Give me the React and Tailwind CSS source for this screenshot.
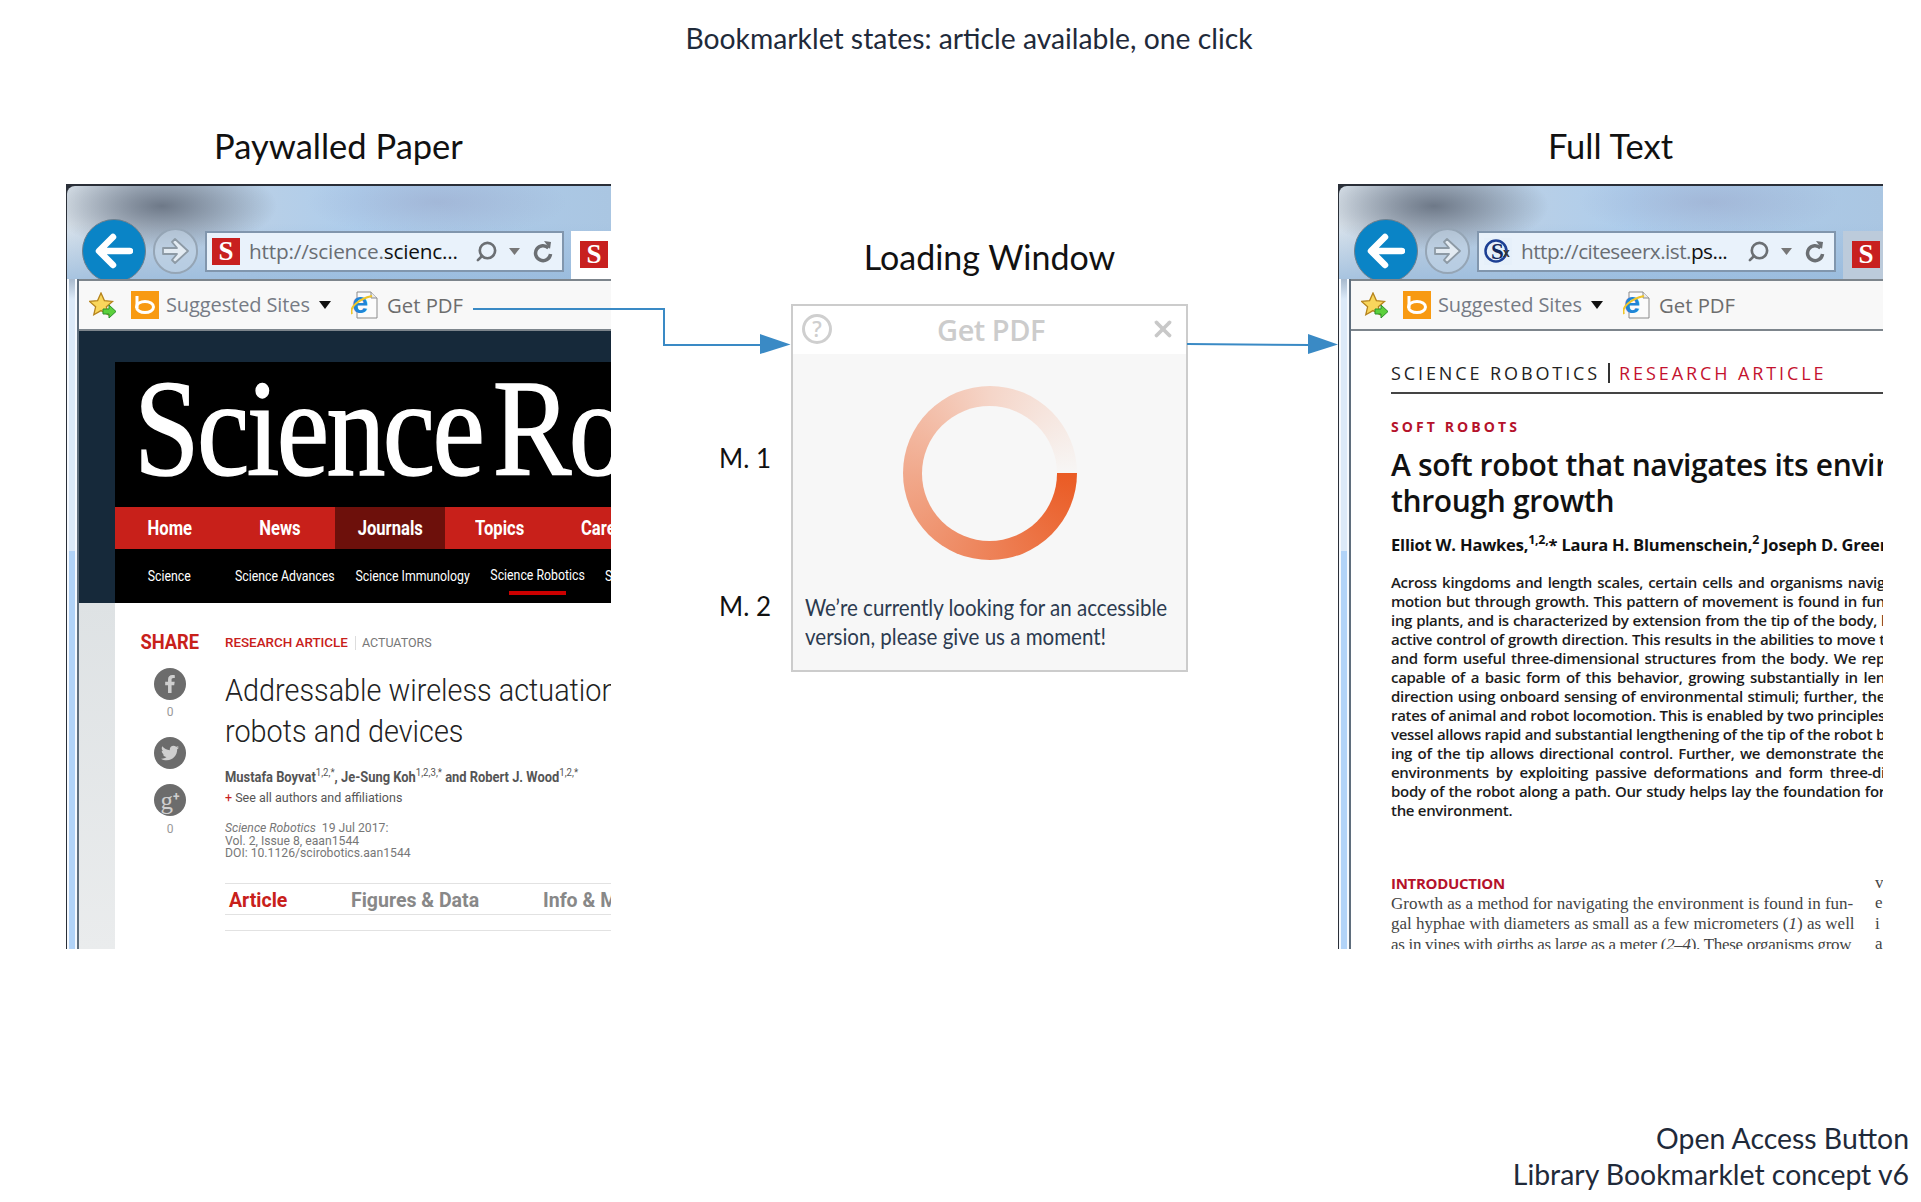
import { Search, X } from 'lucide-react'
import { FaFacebookF, FaTwitter } from 'react-icons/fa'

// cut where the screenshot cuts them, each line is justified to the visible width
const abstractLines = [
  'Across kingdoms and length scales, certain cells and organisms navig',
  'motion but through growth. This pattern of movement is found in fun',
  'ing plants, and is characterized by extension from the tip of the body, l',
  'active control of growth direction. This results in the abilities to move t',
  'and form useful three-dimensional structures from the body. We rep',
  'capable of a basic form of this behavior, growing substantially in len',
  'direction using onboard sensing of environmental stimuli; further, the',
  'rates of animal and robot locomotion. This is enabled by two principles',
  'vessel allows rapid and substantial lengthening of the tip of the robot b',
  'ing of the tip allows directional control. Further, we demonstrate the',
  'environments by exploiting passive deformations and form three-di',
  'body of the robot along a path. Our study helps lay the foundation for',
]

function Favicon() {
  return (
    <div className="flex h-[27px] w-[28px] items-center justify-center bg-[#c8201f] font-['Liberation_Serif',serif] text-[27px] font-bold leading-none text-white">
      S
    </div>
  )
}

function CiteseerIcon() {
  return (
    <svg width="28" height="27" viewBox="0 0 28 27">
      <rect width="28" height="27" fill="#e6f0fa" />
      <circle cx="12" cy="13" r="10.5" fill="none" stroke="#1c3f94" strokeWidth="2.5" />
      <text x="7" y="21" fontFamily="Liberation Serif, serif" fontWeight="700" fontSize="23" fill="#14285c">S</text>
      <text x="19" y="19" fontFamily="Liberation Sans, sans-serif" fontWeight="700" fontSize="12" fill="#333">x</text>
    </svg>
  )
}

function StarIcon() {
  return (
    <svg width="28" height="27" viewBox="0 0 28 27">
      <path d="M12 1l3.4 7.6 8.1.8-6.1 5.4 1.8 8-7.2-4.2-7.2 4.2 1.8-8L.5 9.4l8.1-.8z" fill="#f9d65c" stroke="#b5831c" strokeWidth="1.3" />
      <path d="M14 17h6v-4l7 6.5-7 6.500v-4h-6z" fill="#5bd03c" stroke="#2b8f2b" strokeWidth="1" />
    </svg>
  )
}

function BingIcon() {
  return (
    <svg width="28" height="28" viewBox="0 0 28 28">
      <rect width="28" height="28" fill="#f89a12" />
      <path d="M6 5v12" stroke="#fff" strokeWidth="3" fill="none" />
      <ellipse cx="14" cy="16" rx="8.500" ry="5.500" fill="none" stroke="#fff" strokeWidth="3" />
    </svg>
  )
}

function IeIcon() {
  return (
    <svg width="28" height="28" viewBox="0 0 28 28">
      <path d="M6 1h14l6 6v20H6z" fill="#fbfbfb" stroke="#8b8b8b" strokeWidth="1" />
      <path d="M20 1v6h6" fill="#e9e9e9" stroke="#8b8b8b" strokeWidth="1" />
      <text x="1" y="22" fontFamily="Liberation Sans, sans-serif" fontWeight="700" fontSize="29" fill="#1f86d6">e</text>
      <path d="M1 23C-2 16 8 8 21 5" fill="none" stroke="#f0c62a" strokeWidth="2" />
    </svg>
  )
}

function BackButton() {
  return (
    <div className="flex h-[64px] w-[64px] shrink-0 items-center justify-center rounded-full border border-[#6f7f8c] bg-[#0a84c6]">
      <svg width="38" height="36" viewBox="0 0 38 36" fill="none" stroke="#fff" strokeWidth="6.500" strokeLinecap="round" strokeLinejoin="round">
        <path d="M35 18H5M18 4L4 18l14 14" />
      </svg>
    </div>
  )
}

function ForwardButton() {
  return (
    <div className="mt-[9px] flex h-[46px] w-[45px] shrink-0 items-center justify-center rounded-full border-2 border-[#95a5b5] bg-[#c3d4e4]/60">
      <svg width="28" height="26" viewBox="0 0 28 26" fill="#e3ebf2" stroke="#8d9aa5" strokeWidth="1.800" strokeLinejoin="round">
        <path d="M1 10h14L10 4l3-3 13 12-13 12-3-3 5-6H1z" />
      </svg>
    </div>
  )
}

function Refresh() {
  return (
    <svg width="20" height="24" viewBox="0 0 20 24" fill="none" stroke="#6b6f73" strokeWidth="3.500">
      <path d="M15.500 8A7.500 7.500 0 1 0 17.500 14" />
      <path d="M11 1l7 1-1 7z" fill="#6b6f73" stroke="none" />
    </svg>
  )
}

// shared IE9 frame, the two browsers only differ by url, favicon and page
function Browser({ urlStart, urlEnd, icon, tabActive, children }) {
  return (
    <div className="flex h-[765px] w-[545px] flex-col overflow-hidden bg-[#2a2f38] pt-[2px]">
      <div className="ml-px flex h-[93px] shrink-0 items-start overflow-hidden rounded-tl-[8px] bg-[radial-gradient(ellipse_115px_44px_at_95px_20px,rgba(95,105,120,0.85),rgba(95,105,120,0)),radial-gradient(ellipse_130px_36px_at_370px_16px,rgba(150,160,195,0.45),rgba(150,160,195,0)),linear-gradient(180deg,rgba(170,200,232,0)_40%,rgba(150,185,220,0.75)_100%),linear-gradient(90deg,#dbe4ec_0px,#c5d2e0_70px,#aecdec_290px,#aac6e2_545px)] pl-[15px] pt-[33px]">
        <BackButton />
        <div className="ml-[7px]">
          <ForwardButton />
        </div>
        <div className="ml-[7px] mt-[12px] flex h-[41px] w-[359px] shrink-0 items-center border-2 border-[#8196ad] bg-[#e9f2fb] pl-[5px]">
          {icon}
          <span className={`ml-[9px] w-[210px] whitespace-nowrap font-['Open_Sans',sans-serif] text-[20.800px] leading-none text-[#6a6e73] ${tabActive ? 'tracking-[-0.2px]' : 'tracking-[-0.55px]'}`}>
            {urlStart}
            <span className="text-[#111]">{urlEnd}</span>
          </span>
          <Search className="ml-[16px] -scale-x-100 text-[#6b6f73]" size={23} strokeWidth={2.75} />
          <svg className="ml-[11px]" width="11" height="7" viewBox="0 0 11 7">
            <path d="M0 0h11L5.500 7z" fill="#777" />
          </svg>
          <div className="ml-[13px]">
            <Refresh />
          </div>
        </div>
        <div className={`ml-[7px] mt-[12px] flex h-[48px] flex-1 items-start pl-[9px] pt-[10px] ${tabActive ? 'bg-white' : 'bg-[#bccbdb]'}`}>
          <Favicon />
        </div>
      </div>
      <div className="flex min-h-0 flex-1">
        <div className="ml-px flex w-[12px] shrink-0 flex-col border-r-2 border-[#5f6e7d] bg-[#f5f9fe] pl-[2px] pr-[2px]">
          <div className="h-[20px] bg-[linear-gradient(180deg,#a7b9cd,#dbe9f8)]" />
          <div className="h-[252px] bg-[#dbe9f8]" />
          <div className="flex-1 bg-[#b1d3f8]" />
        </div>
        <div className="flex min-w-0 flex-1 flex-col bg-white">
          <div className="flex h-[52px] shrink-0 items-center border-y-2 border-y-[#7d858c] bg-[#f8f8f8] pl-[10px]">
            <StarIcon />
            <div className="ml-[14px]">
              <BingIcon />
            </div>
            <span className="ml-[7px] w-[153px] whitespace-nowrap font-['Open_Sans',sans-serif] text-[20px] leading-none tracking-[-0.1px] text-[#767b85]">
              Suggested Sites
            </span>
            <svg width="12" height="8" viewBox="0 0 12 8">
              <path d="M0 0h12L6 8z" fill="#111" />
            </svg>
            <div className="ml-[20px]">
              <IeIcon />
            </div>
            <span className="ml-[8px] font-['Open_Sans',sans-serif] text-[20.300px] leading-none text-[#6d6d6d]">Get PDF</span>
          </div>
          <div className="min-h-0 flex-1 overflow-hidden">{children}</div>
        </div>
      </div>
    </div>
  )
}

function NavItem({ label, active }) {
  return (
    <div className={`flex h-full w-[110px] shrink-0 items-center justify-center ${active ? 'bg-[#6d100b]' : ''}`}>
      <span className="inline-block scale-x-[0.83] whitespace-nowrap font-['Roboto',sans-serif] text-[20px] font-bold text-white">{label}</span>
    </div>
  )
}

function SubNavText({ children }) {
  return <span className="inline-block scale-x-[0.82] whitespace-nowrap font-['Roboto',sans-serif] text-[15px] text-white">{children}</span>
}

function ShareCircle({ children }) {
  return (
    <div className="flex h-[32px] w-[32px] items-center justify-center rounded-full bg-[#6c6c6c] text-[18px] text-[#cfcfcf]">
      {children}
    </div>
  )
}

function PaywalledPage() {
  return (
    <div className="flex h-full">
      <div className="flex w-[36px] shrink-0 flex-col">
        <div className="h-[272px] shrink-0 bg-[#16293a]" />
        <div className="flex-1 bg-[linear-gradient(180deg,#dee2e4,#eaeced)]" />
      </div>
      <div className="flex min-w-0 flex-1 flex-col">
        <div className="h-[31px] shrink-0 bg-[#16293a]" />
        <div className="h-[145px] shrink-0 overflow-hidden bg-black pl-[19px]">
          <div className="origin-left scale-x-[0.86] whitespace-nowrap font-['Liberation_Serif',serif] text-[137px] font-normal leading-[135px] tracking-[-3px] text-white [word-spacing:-19px] [-webkit-text-stroke:1.5px_#fff]">
            Science Robotics
          </div>
        </div>
        <div className="flex h-[42px] shrink-0 bg-[#c8201a]">
          <NavItem label="Home" />
          <NavItem label="News" />
          <NavItem label="Journals" active />
          <NavItem label="Topics" />
          <NavItem label="Careers" />
        </div>
        <div className="flex h-[54px] shrink-0 items-center bg-black pb-[2px]">
          <div className="w-[109px] shrink-0 text-center">
            <SubNavText>Science</SubNavText>
          </div>
          <div className="w-[119px] shrink-0 text-center">
            <SubNavText>Science Advances</SubNavText>
          </div>
          <div className="w-[136px] shrink-0 text-center">
            <SubNavText>Science Immunology</SubNavText>
          </div>
          <div className="relative flex h-full w-[117px] shrink-0 items-center justify-center">
            <SubNavText>Science Robotics</SubNavText>
            <div className="absolute bottom-[6px] left-[30px] h-[4px] w-[57px] bg-[#cc0000]" />
          </div>
          <div className="pl-[9px]">
            <span className="inline-block origin-left scale-x-[0.82] whitespace-nowrap font-['Roboto',sans-serif] text-[15px] text-white">Signaling</span>
          </div>
        </div>
        <div className="flex min-h-0 flex-1">
          <div className="flex w-[110px] shrink-0 flex-col items-center pt-[26px] font-['Roboto',sans-serif]">
            <span className="inline-block h-[26px] scale-x-[0.87] font-['Roboto',sans-serif] text-[21px] font-bold leading-[26px] text-[#c8201a]">SHARE</span>
            <div className="mt-[13px]">
              <ShareCircle>
                <FaFacebookF />
              </ShareCircle>
            </div>
            <span className="mt-[4px] h-[16px] text-[12px] leading-[16px] text-[#999]">0</span>
            <div className="mt-[17px]">
              <ShareCircle>
                <FaTwitter />
              </ShareCircle>
            </div>
            <div className="mt-[15px]">
              <ShareCircle>
                <span className="font-['Liberation_Serif',serif] text-[25px] leading-none">g</span>
                <span className="mb-[6px] text-[12px] font-bold leading-none">+</span>
              </ShareCircle>
            </div>
            <span className="mt-[5px] h-[16px] text-[12px] leading-[16px] text-[#999]">0</span>
          </div>
          <div className="min-w-0 flex-1 overflow-hidden pt-[28px] font-['Roboto',sans-serif]">
            <div className="flex h-[24px] items-center whitespace-nowrap">
              <span className="text-[13.400px] font-medium text-[#c8201a]">RESEARCH ARTICLE</span>
              <span className="ml-[7px] h-[14px] w-px bg-[#ddd]" />
              <span className="ml-[6px] text-[12.500px] text-[#777]">ACTUATORS</span>
            </div>
            <div className="mt-[14.5px] origin-left scale-x-[0.93] whitespace-nowrap text-[31px] font-light leading-[41px] text-[#222]">
              <div>Addressable wireless actuation</div>
              <div>robots and devices</div>
            </div>
            <div className="mt-[15.5px] h-[20px] origin-left scale-x-[0.86] whitespace-nowrap text-[15px] font-bold leading-[20px] text-[#555]">
              Mustafa Boyvat<sup className="font-normal">1,2,*</sup>, Je-Sung Koh<sup className="font-normal">1,2,3,*</sup> and Robert J. Wood<sup className="font-normal">1,2,*</sup>
            </div>
            <div className="mt-[3px] h-[16px] whitespace-nowrap text-[12.500px] leading-[16px] text-[#555]">
              <span className="text-[#c8201a]">+</span> See all authors and affiliations
            </div>
            <div className="mt-[16px] whitespace-nowrap text-[12.200px] leading-[12.700px] text-[#777]">
              <div>
                <i>Science Robotics</i>&nbsp; 19 Jul 2017:
              </div>
              <div>Vol. 2, Issue 8, eaan1544</div>
              <div>DOI: 10.1126/scirobotics.aan1544</div>
            </div>
            <div className="mt-[22.500px] flex h-[32px] items-center whitespace-nowrap border-y border-[#e2e2e2] pl-[4px] pt-[4px] text-[19.500px] font-bold text-[#888]">
              <span className="w-[122px] shrink-0 text-[#c8201a]">Article</span>
              <span className="w-[192px] shrink-0">Figures &amp; Data</span>
              <span>Info &amp; M</span>
            </div>
            <div className="mt-[15px] h-px bg-[#e2e2e2]" />
          </div>
        </div>
      </div>
    </div>
  )
}

function FullTextPage() {
  return (
    <div className="h-full overflow-hidden pl-[40px]">
      <div className="mt-[27px] flex h-[30px] items-center whitespace-nowrap font-['Open_Sans',sans-serif] text-[18px] tracking-[2.900px] text-[#222]">
        <span>SCIENCE ROBOTICS</span>
        <span className="ml-[8px] h-[20px] w-[2px] bg-[#333]" />
        <span className="ml-[9px] text-[#c4122f]">RESEARCH ARTICLE</span>
      </div>
      <div className="mt-[4px] h-[2px] bg-[#444]" />
      <div className="mt-[23px] h-[20px] whitespace-nowrap font-['Open_Sans',sans-serif] text-[14px] font-bold leading-[20px] tracking-[3.100px] text-[#b5122b]">
        SOFT ROBOTS
      </div>
      <div className="mt-[9.500px] whitespace-nowrap font-['Open_Sans',sans-serif] text-[30px] font-semibold leading-[36.500px] tracking-[-0.35px] text-[#111]">
        <div>A soft robot that navigates its envir</div>
        <div>through growth</div>
      </div>
      <div className="mt-[14px] h-[22px] whitespace-nowrap font-['Open_Sans',sans-serif] text-[16.500px] font-bold leading-[22px] tracking-[-0.2px] text-[#111]">
        Elliot W. Hawkes,<sup>1,2,</sup>* Laura H. Blumenschein,<sup>2</sup> Joseph D. Green
      </div>
      <div className="mt-[17.500px] w-[494px] font-['Open_Sans',sans-serif] text-[15px] font-semibold leading-[19px] tracking-[-0.3px] text-[#1c1c1c]">
        {abstractLines.map((line) => (
          <div key={line} className="whitespace-nowrap [text-align-last:justify]">
            {line}
          </div>
        ))}
        <div>the environment.</div>
      </div>
      <div className="mt-[52.500px] flex whitespace-nowrap">
        <div className="w-[484px] shrink-0 overflow-hidden">
          <div className="h-[21px] font-['Open_Sans',sans-serif] text-[15px] font-bold leading-[20px] tracking-[-0.3px] text-[#b5122b]">INTRODUCTION</div>
          <div className="font-['Liberation_Serif',serif] text-[17px] leading-[20.500px] text-[#444]">
            <div>Growth as a method for navigating the environment is found in fun-</div>
            <div>
              gal hyphae with diameters as small as a few micrometers (<i>1</i>) as well
            </div>
            <div className="tracking-[-0.3px]">
              as in vines with girths as large as a meter (<i>2–4</i>). These organisms grow
            </div>
          </div>
        </div>
        <div className="font-['Liberation_Serif',serif] text-[17px] leading-[20.500px] text-[#444]">
          <div>v</div>
          <div>e</div>
          <div>i</div>
          <div>a</div>
        </div>
      </div>
    </div>
  )
}

function LoadingDialog() {
  return (
    <div className="h-[368px] w-[397px] border-2 border-[#cccccc] bg-[#f7f7f7]">
      <div className="flex h-[48px] items-center justify-between bg-white pb-[2px] pl-[9px] pr-[10px]">
        <div className="flex h-[30px] w-[30px] items-center justify-center rounded-full border-[3px] border-[#cfcfcf] font-['Open_Sans',sans-serif] text-[21px] font-semibold leading-none text-[#cfcfcf]">
          ?
        </div>
        <span className="font-['Open_Sans',sans-serif] text-[29px] font-semibold leading-none tracking-[-0.5px] text-[#cccccc]">Get PDF</span>
        <X className="text-[#c8c8c8]" size={26} strokeWidth={3.5} />
      </div>
      <div className="flex flex-col items-center pt-[32px]">
        <div className="flex h-[174px] w-[174px] items-center justify-center rounded-full bg-[conic-gradient(from_90deg,#ea5b24,#f1a98c_50%,#f5d5c8_75%,#f7f6f5)]">
          <div className="h-[135px] w-[135px] rounded-full bg-[#f7f7f7]" />
        </div>
        <div className="mt-[32px] w-full whitespace-nowrap pl-[12px] font-['Lato',sans-serif] text-[24px] leading-[29px] text-[#2c3b50]">
          <div className="origin-left scale-x-[0.855]">We’re currently looking for an accessible</div>
          <div className="origin-left scale-x-[0.855]">version, please give us a moment!</div>
        </div>
      </div>
    </div>
  )
}

export default function App() {
  return (
    <div className="relative flex h-[1202px] w-[1921px] flex-col overflow-hidden bg-white font-['Lato',sans-serif]">
      <div className="flex h-[76px] shrink-0 items-center justify-center pl-[17px] text-[28.300px] leading-none text-[#1f2a3a]">
        Bookmarklet states: article available, one click
      </div>

      <div className="flex shrink-0 items-start pl-[66px]">
        <div className="w-[545px] shrink-0">
          <div className="mt-[46px] flex h-[48px] items-center justify-center text-[34.500px] leading-none text-[#111]">
            Paywalled Paper
          </div>
          <div className="mt-[14px]">
            <Browser urlStart="http://science." urlEnd="scienc..." icon={<Favicon />} tabActive>
              <PaywalledPage />
            </Browser>
          </div>
        </div>

        <div className="ml-[108px] flex w-[72px] shrink-0 flex-col pt-[362px] text-[26px] leading-[40px] text-[#111]">
          <div>M. 1</div>
          <div className="mt-[108px]">M. 2</div>
        </div>

        <div className="shrink-0">
          <div className="mt-[157px] flex h-[48px] items-center justify-center text-[34px] leading-none text-[#111]">
            Loading Window
          </div>
          <div className="mt-[23px]">
            <LoadingDialog />
          </div>
        </div>

        <div className="ml-[150px] w-[545px] shrink-0">
          <div className="mt-[46px] flex h-[48px] items-center justify-center text-[34.500px] leading-none text-[#111]">
            Full Text
          </div>
          <div className="mt-[14px]">
            <Browser urlStart="http://citeseerx.ist." urlEnd="ps..." icon={<CiteseerIcon />}>
              <FullTextPage />
            </Browser>
          </div>
        </div>
      </div>

      <div className="mt-auto pb-[10px] pr-[12px] text-right text-[28.400px] leading-[36px] text-[#1f2a3a]">
        <div>Open Access Button</div>
        <div>Library Bookmarklet concept v6</div>
      </div>

      <svg className="pointer-events-none absolute left-0 top-0" width="1921" height="1202" viewBox="0 0 1921 1202">
        <path d="M473 309H664V345H762" fill="none" stroke="#3a8ac5" strokeWidth="2" />
        <path d="M760 334L790.500 344.500L760 354z" fill="#3a8ac5" />
        <path d="M1187 344L1310 345" fill="none" stroke="#3a8ac5" strokeWidth="2" />
        <path d="M1308 334L1338 344.500L1308 354z" fill="#3a8ac5" />
      </svg>
    </div>
  )
}
